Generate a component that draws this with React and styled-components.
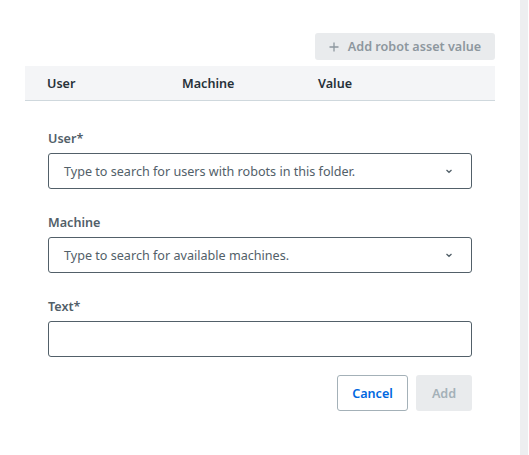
import React from "react";
import styled, { createGlobalStyle } from "styled-components";

const Global = createGlobalStyle`
  html, body { margin: 0; padding: 0; background: #fff; }
  body { font-family: "Noto Sans", "Open Sans", sans-serif; color: #273139; }
  * { box-sizing: border-box; }
`;

const Page = styled.div`
  display: flex;
  width: 529px;
  height: 455px;
  overflow: hidden;
`;

const Main = styled.div`
  flex: 0 0 520px;
  padding: 33px 25px 0 25px;
`;

const Scroll = styled.div`
  flex: 0 0 8px;
  background: #edeef0;
`;

const Toolbar = styled.div`
  display: flex;
  justify-content: flex-end;
  margin-bottom: 6px;
`;

const GhostButton = styled.button`
  display: flex;
  align-items: center;
  justify-content: center;
  gap: 9px;
  height: 27px;
  width: 180px;
  padding: 0;
  border: none;
  border-radius: 3px;
  background: #e9ebed;
  color: #8d979e;
  font-family: inherit;
  font-size: 12.6px;
  font-weight: 600;
  white-space: nowrap;
`;

const TableHead = styled.div`
  display: grid;
  grid-template-columns: 135px 136px 1fr;
  align-items: center;
  height: 35px;
  padding-left: 22px;
  background: #f4f5f7;
  border-bottom: 1px solid #cfd8dd;
  font-size: 12.6px;
  font-weight: 600;
  color: #273139;
`;

const Form = styled.div`
  padding: 29px 23px 0 23px;
  display: flex;
  flex-direction: column;
`;

const Label = styled.div`
  font-size: 12.6px;
  font-weight: 600;
  color: #526069;
  line-height: 18px;
  margin-bottom: 5px;
`;

const Field = styled.div`
  display: flex;
  align-items: center;
  justify-content: space-between;
  height: 36px;
  border: 1px solid #526069;
  border-radius: 3px;
  padding: 0 17px 0 15px;
  margin-bottom: ${(p) => p.$gap}px;
  font-size: 12.6px;
  color: #526069;
`;

const Actions = styled.div`
  display: flex;
  justify-content: flex-end;
  gap: 8px;
`;

const Button = styled.button`
  height: 36px;
  padding: 0;
  border-radius: 3px;
  font-family: inherit;
  font-size: 12.6px;
  font-weight: 600;
  border: ${(p) => (p.$primary ? "none" : "1px solid #a4b1b8")};
  background: ${(p) => (p.$primary ? "#e9ebed" : "#fff")};
  color: ${(p) => (p.$primary ? "#a4b1b8" : "#0067df")};
  width: ${(p) => (p.$primary ? "56px" : "71px")};
`;

const Chevron = () => (
  <svg width="10" height="10" viewBox="0 0 10 10">
    <path d="M2.5 4 L5 6.3 L7.5 4" fill="none" stroke="#526069" strokeWidth="1.3" />
  </svg>
);

const Plus = () => (
  <svg width="10" height="10" viewBox="0 0 10 10">
    <path d="M5 0.5 V9.5 M0.5 5 H9.5" stroke="#8d979e" strokeWidth="1.3" />
  </svg>
);

export default function App() {
  return (
    <Page>
      <Global />
      <Main>
        <Toolbar>
          <GhostButton>
            <Plus />
            Add robot asset value
          </GhostButton>
        </Toolbar>
        <TableHead>
          <span>User</span>
          <span>Machine</span>
          <span>Value</span>
        </TableHead>
        <Form>
          <Label>User*</Label>
          <Field $gap={25}>
            Type to search for users with robots in this folder.
            <Chevron />
          </Field>
          <Label>Machine</Label>
          <Field $gap={25}>
            Type to search for available machines.
            <Chevron />
          </Field>
          <Label>Text*</Label>
          <Field $gap={18} />
          <Actions>
            <Button>Cancel</Button>
            <Button $primary>Add</Button>
          </Actions>
        </Form>
      </Main>
      <Scroll />
    </Page>
  );
}
